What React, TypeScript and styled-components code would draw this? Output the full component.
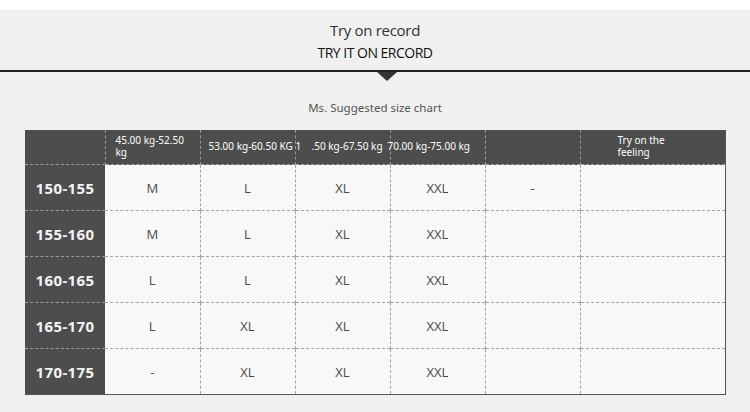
import styled, { createGlobalStyle } from "styled-components";

const weights = [
  { text: "45.00 kg-52.50 kg", pad: 10 },
  { text: "53.00 kg-60.50 KG 1", pad: 8 },
  { text: ".50 kg-67.50 kg", pad: 16 },
  { text: "70.00 kg-75.00 kg", pad: -3 },
  { text: "", pad: 10 },
  { text: "Try on the feeling", pad: 37 },
];

const rows = [
  { height: "150-155", sizes: ["M", "L", "XL", "XXL", "-", ""] },
  { height: "155-160", sizes: ["M", "L", "XL", "XXL", "", ""] },
  { height: "160-165", sizes: ["L", "L", "XL", "XXL", "", ""] },
  { height: "165-170", sizes: ["L", "XL", "XL", "XXL", "", ""] },
  { height: "170-175", sizes: ["-", "XL", "XL", "XXL", "", ""] },
];

const colWidths = [80, 95, 95, 95, 95, 95, 145];

function App() {
  return (
    <>
      <GlobalStyle />
      <Page>
        <Banner>
          <Title>Try on record</Title>
          <Subtitle>TRY IT ON ERCORD</Subtitle>
        </Banner>
        <Divider />
        <Caption>Ms. Suggested size chart</Caption>
        <ChartWrap>
          <Chart>
            <colgroup>
              {colWidths.map((w, i) => (
                <col key={i} style={{ width: w }} />
              ))}
            </colgroup>
            <thead>
              <tr>
                <CornerCell />
                {weights.map((w, i) => (
                  <HeadCell key={i}>
                    <HeadText $pad={w.pad} $wrap={i === 0 || i === 5}>
                      {w.text}
                    </HeadText>
                  </HeadCell>
                ))}
              </tr>
            </thead>
            <tbody>
              {rows.map((r) => (
                <tr key={r.height}>
                  <RowLabel>{r.height}</RowLabel>
                  {r.sizes.map((s, si) => (
                    <SizeCell key={si} $edge={si === r.sizes.length - 1}>
                      {s}
                    </SizeCell>
                  ))}
                </tr>
              ))}
            </tbody>
          </Chart>
        </ChartWrap>
      </Page>
    </>
  );
}

const GlobalStyle = createGlobalStyle`
  html, body {
    margin: 0;
    padding: 0;
    background: #f0f0f0;
  }
  body {
    font-family: "Noto Sans", "Open Sans", sans-serif;
  }
`;

const Page = styled.div`
  width: 750px;
  height: 412px;
  padding-top: 10px;
  background: #f0f0f0;
  box-shadow: inset 0 10px 0 #ffffff;
  box-sizing: border-box;
  overflow: hidden;
`;

const Banner = styled.div`
  height: 60px;
  display: flex;
  flex-direction: column;
  align-items: center;
  padding-top: 10px;
  box-sizing: border-box;
  font-family: "Open Sans", sans-serif;
`;

const Title = styled.div`
  font-size: 15px;
  line-height: 20px;
  letter-spacing: -0.3px;
  color: #333;
`;

const Subtitle = styled.div`
  margin-top: 4px;
  font-size: 14px;
  line-height: 18px;
  letter-spacing: -0.5px;
  color: #111;
`;

const Divider = styled.div`
  position: relative;
  height: 0;
  border-top: 2px solid #222;

  &::after {
    content: "";
    position: absolute;
    left: 377px;
    top: 0;
    border-left: 10px solid transparent;
    border-right: 10px solid transparent;
    border-top: 9px solid #333;
  }
`;

const Caption = styled.div`
  margin-top: 28px;
  text-align: center;
  font-size: 11.5px;
  line-height: 16px;
  color: #555;
`;

const ChartWrap = styled.div`
  margin: 14px 0 0 25px;
`;

const Chart = styled.table`
  width: 700px;
  table-layout: fixed;
  border-collapse: collapse;
  border-right: 1px solid #555;
  border-bottom: 1px solid #555;
`;

const CornerCell = styled.th`
  height: 34px;
  padding: 0;
  background: #4d4d4d;
  border-right: 1px dashed #9a9a9a;
`;

const HeadCell = styled.th`
  height: 34px;
  padding: 0;
  background: #4d4d4d;
  border-right: 1px dashed #9a9a9a;
  color: #fff;
  font-size: 10px;
  font-weight: 400;
  line-height: 12px;
  text-align: left;

  &:last-child {
    border-right: none;
  }
`;

const HeadText = styled.span<{ $pad: number; $wrap: boolean }>`
  display: block;
  margin: 0 0 2px ${({ $pad }) => $pad}px;
  max-width: ${({ $wrap }) => ($wrap ? "78px" : "none")};
  white-space: ${({ $wrap }) => ($wrap ? "normal" : "nowrap")};
`;

const RowLabel = styled.th`
  height: 45px;
  padding: 0;
  background: #4d4d4d;
  border-top: 1px dashed #9a9a9a;
  color: #f4f4f4;
  font-family: "Open Sans", sans-serif;
  font-size: 15px;
  font-weight: 700;
  letter-spacing: 0.4px;
  text-align: center;
`;

const SizeCell = styled.td<{ $edge: boolean }>`
  height: 45px;
  padding: 0;
  background: #f8f8f8;
  border-top: 1px dashed #a4a4a4;
  border-right: ${({ $edge }) => ($edge ? "none" : "1px dashed #a4a4a4")};
  color: #4a4a4a;
  font-family: "Open Sans", sans-serif;
  font-size: 13px;
  text-align: center;
`;

export default App;
